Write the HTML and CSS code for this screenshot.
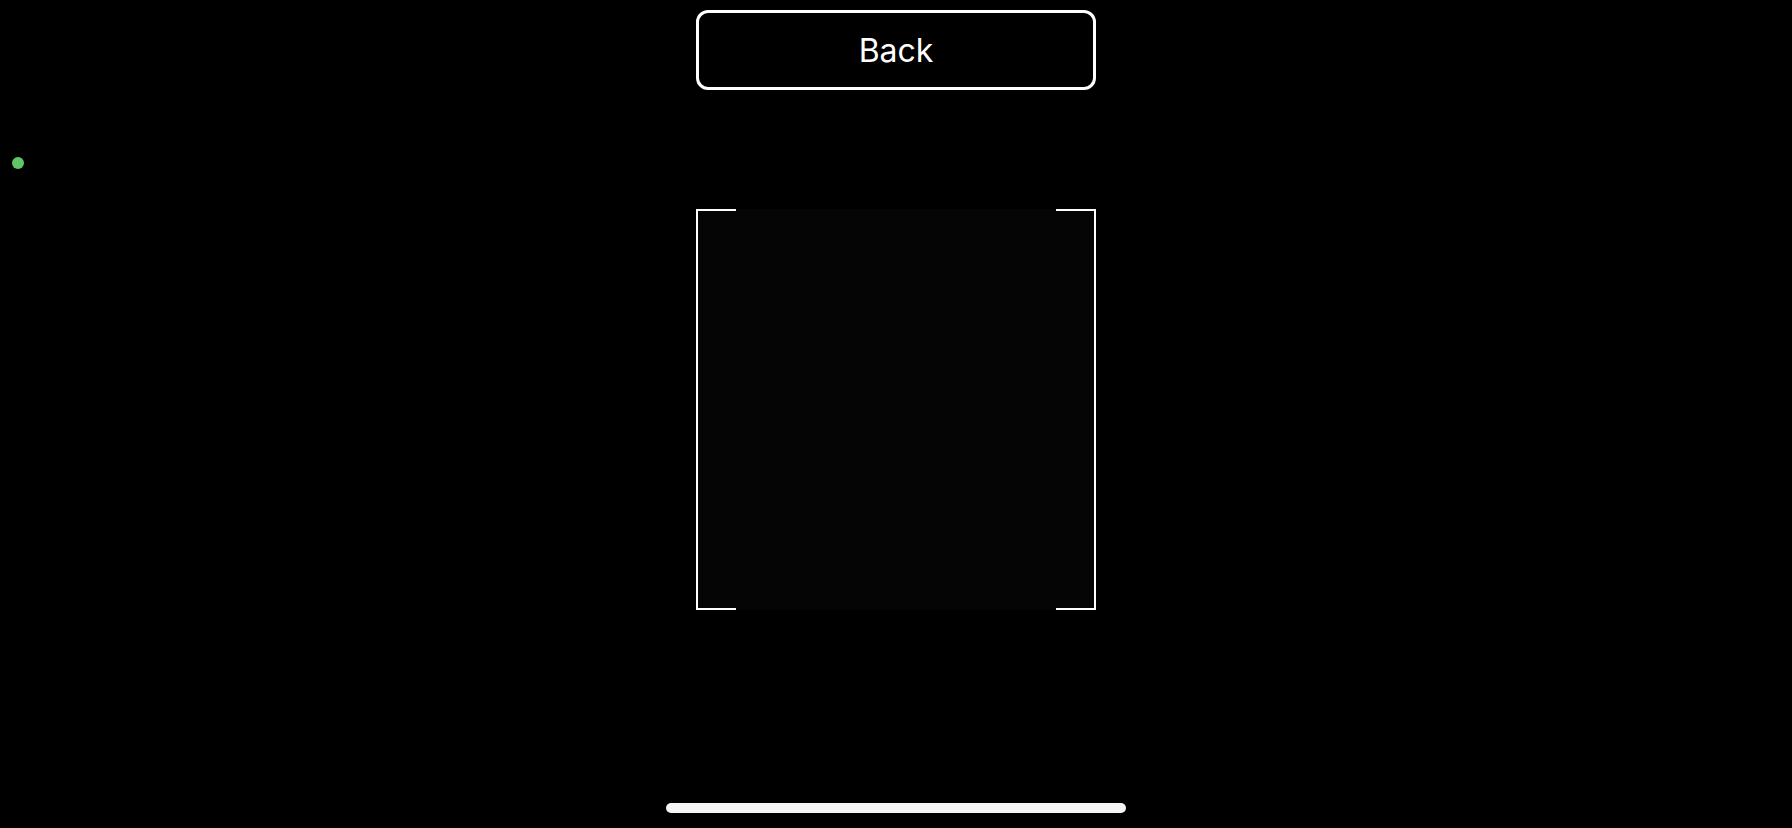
FILE: index.html
```html
<!DOCTYPE html>
<html lang="en">
<head>
<meta charset="utf-8">
<title>Scanner</title>
<link rel="stylesheet" href="styles.css">
</head>
<body>
<div class="screen">
  <span class="status-dot"></span>
  <button class="back-btn" type="button">Back</button>
  <div class="scan-frame">
    <div class="bracket bracket-left"></div>
    <div class="bracket bracket-right"></div>
  </div>
  <div class="home-indicator"></div>
</div>
</body>
</html>
```

FILE: styles.css
```css
html, body {
  margin: 0;
  padding: 0;
  background: #000;
}

.screen {
  position: relative;
  width: 1792px;
  height: 828px;
  background: #000;
  display: flex;
  flex-direction: column;
  align-items: center;
  overflow: hidden;
  font-family: Inter, "Noto Sans", "Liberation Sans", sans-serif;
}

.status-dot {
  position: absolute;
  left: 12px;
  top: 157px;
  width: 12px;
  height: 12px;
  border-radius: 50%;
  background: #62c466;
}

.back-btn {
  margin-top: 10px;
  width: 400px;
  height: 80px;
  box-sizing: border-box;
  border: 3px solid #fff;
  border-radius: 12px;
  background: #000;
  color: #fff;
  font-family: Inter, "Noto Sans", "Liberation Sans", sans-serif;
  font-size: 32px;
  font-weight: 400;
  padding: 0;
}

.scan-frame {
  margin-top: 119px;
  width: 400px;
  height: 401px;
  background: #050505;
  display: flex;
  justify-content: space-between;
}

.bracket {
  width: 40px;
  height: 100%;
  box-sizing: border-box;
  border-top: 2px solid #fff;
  border-bottom: 2px solid #fff;
}

.bracket-left {
  border-left: 2px solid #fff;
}

.bracket-right {
  border-right: 2px solid #fff;
}

.home-indicator {
  margin-top: 193px;
  width: 460px;
  height: 10px;
  border-radius: 5px;
  background: #f5f5f5;
}
```
